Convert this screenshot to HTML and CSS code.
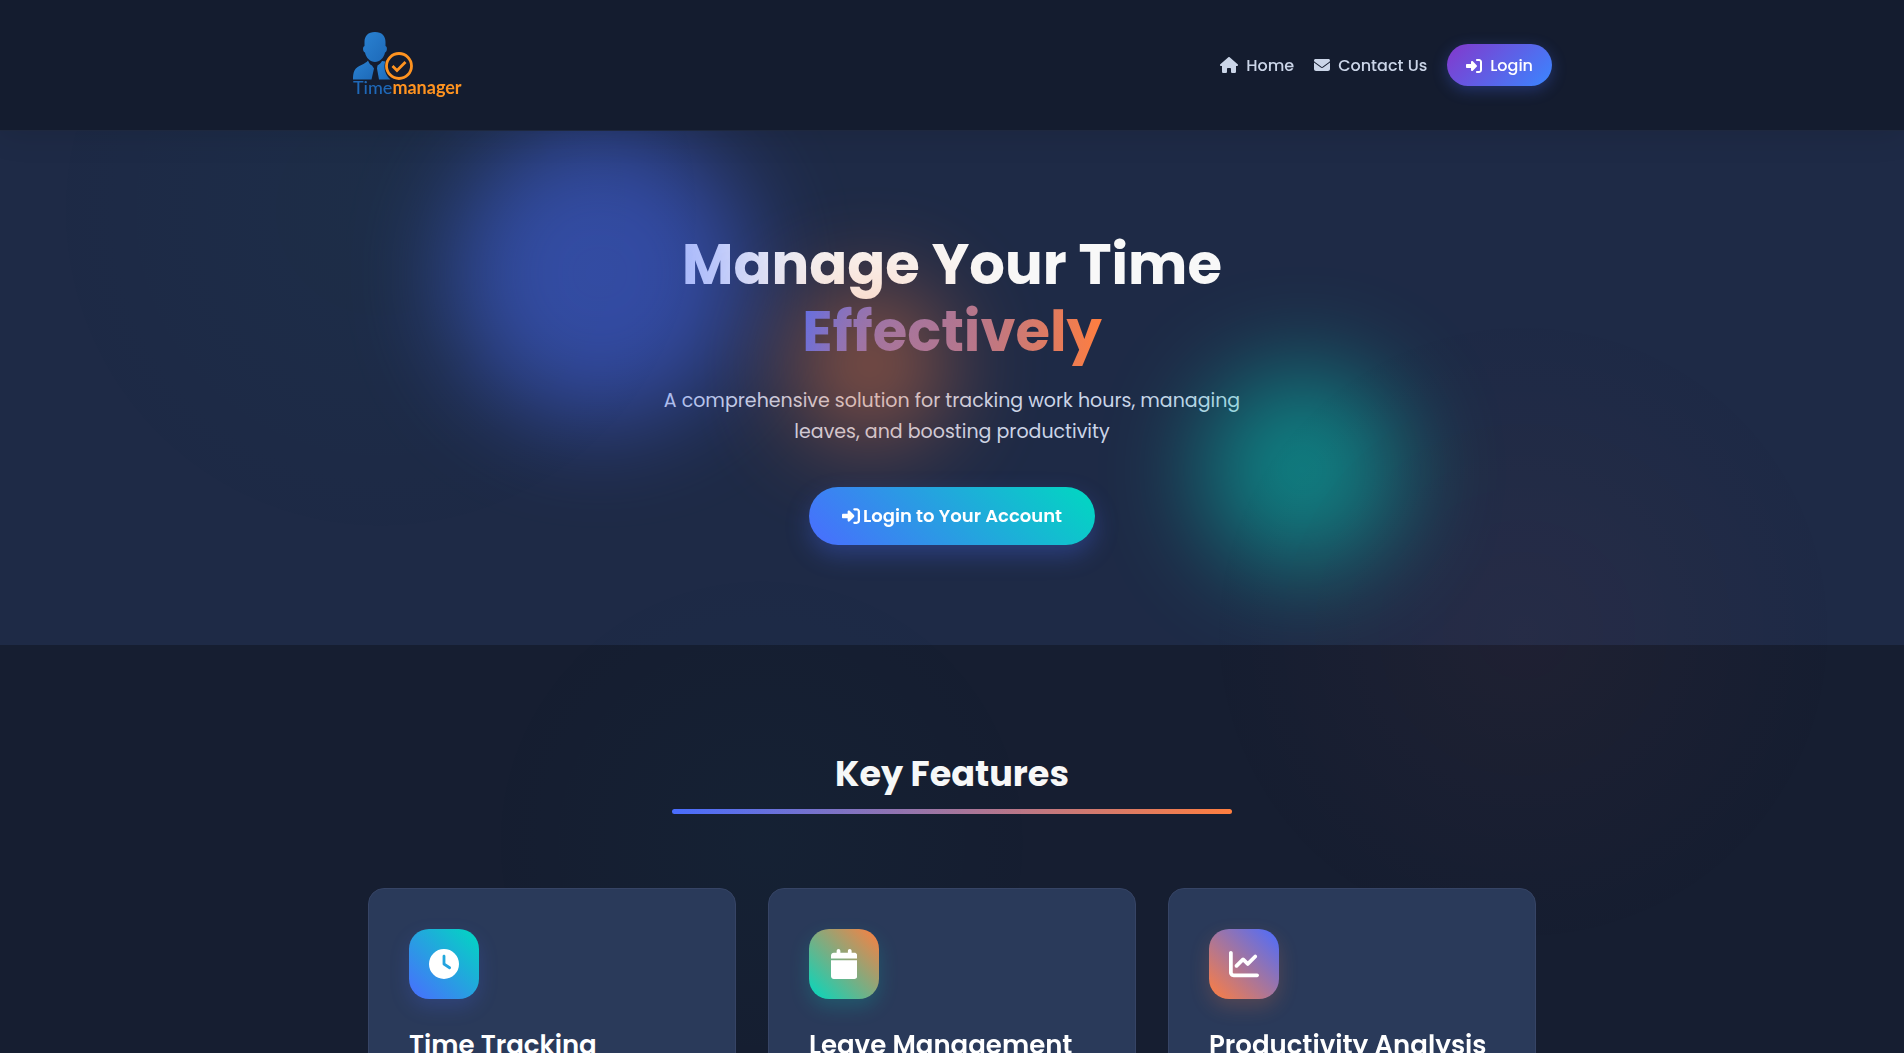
FILE: index.html
```html
<!DOCTYPE html>
<html lang="en">
<head>
<meta charset="utf-8">
<meta name="viewport" content="width=device-width, initial-scale=1">
<title>Timemanager</title>
<link rel="stylesheet" href="styles.css">
</head>
<body>
<svg class="sprite" aria-hidden="true">
  <symbol id="i-login" viewBox="0 0 512 512"><path d="M217.900 105.900L340.700 228.700c7.200 7.200 11.300 17.100 11.300 27.300s-4.100 20.100-11.300 27.300L217.900 406.100c-6.400 6.400-15 9.900-24 9.900c-18.700 0-33.900-15.200-33.900-33.900l0-62.100L32 320c-17.700 0-32-14.300-32-32l0-64c0-17.700 14.300-32 32-32l128 0 0-62.100c0-18.700 15.200-33.900 33.900-33.900c9 0 17.600 3.600 24 9.900zM352 416l64 0c17.700 0 32-14.300 32-32l0-256c0-17.700-14.300-32-32-32l-64 0c-17.700 0-32-14.300-32-32s14.300-32 32-32l64 0c53 0 96 43 96 96l0 256c0 53-43 96-96 96l-64 0c-17.700 0-32-14.300-32-32s14.300-32 32-32z"/></symbol>
</svg>
<header class="header">
  <div class="container header-inner">
    <a class="logo" href="#" aria-label="Timemanager">
      <svg width="110" height="70" viewBox="0 0 110 70">
        <defs>
          <linearGradient id="person" x1="0" y1="0" x2="1" y2="1"><stop offset="0" stop-color="#2a82d2"/><stop offset="1" stop-color="#1d69b8"/></linearGradient>
        </defs>
        <g fill="url(#person)">
          <path d="M23 2c-7 0-10.500 4-10.500 10v4c-2 .5-2 5.500.5 6.500C14 28 18.500 32 23 32s9-4 10-9.500c2.500-1 2.500-6 .5-6.500v-4C33.500 6 30 2 23 2z"/>
          <path d="M16 30.500C14 34 5 35.500 2.500 40.500 1 43.500 1 47 1 49.500h18.500l2.500-11-2-3C18 35 16.800 32.500 16 30.500z"/>
          <path d="M30 31c-.8 1.500-2.500 3.500-4.500 4.500L25 38.500l2 11h11.500c-3.500-3-6-7.500-6-12.500 0-2 .3-4 .8-5.500z"/>
        </g>
        <circle cx="47" cy="36" r="12.500" fill="none" stroke="#ff9320" stroke-width="2.800"/>
        <path d="M40.500 36l4.500 4.500 8.500-8.500" fill="none" stroke="#ff9320" stroke-width="2.800"/>
        <text class="logo-text" x="1" y="64"><tspan class="logo-time">Time</tspan><tspan class="logo-manager">manager</tspan></text>
      </svg>
    </a>
    <nav class="nav">
      <a class="nav-link" href="#"><svg class="icon-home" viewBox="0 0 576 512"><path d="M575.8 255.500c0 18-15 32.100-32 32.100l-32 0 .7 160.200c0 2.700-.2 5.400-.5 8.100l0 16.200c0 22.100-17.900 40-40 40l-16 0c-1.100 0-2.200 0-3.300-.1c-1.400 .1-2.800 .1-4.200 .1L416 512l-24 0c-22.100 0-40-17.900-40-40l0-24 0-64c0-17.700-14.300-32-32-32l-64 0c-17.700 0-32 14.300-32 32l0 64 0 24c0 22.100-17.900 40-40 40l-24 0-31.900 0c-1.500 0-3-.1-4.500-.2c-1.200 .1-2.400 .2-3.600 .2l-16 0c-22.100 0-40-17.900-40-40l0-112c0-.9 0-1.900 .1-2.800l0-69.700-32 0c-18 0-32-14-32-32.100c0-9 3-17 10-24L266.400 8c7-7 15-8 22-8s15 2 21 7L564.800 231.500c8 7 12 15 11 24z"/></svg>Home</a>
      <a class="nav-link" href="#"><svg class="icon" viewBox="0 0 512 512"><path d="M48 64C21.500 64 0 85.500 0 112c0 15.100 7.100 29.300 19.200 38.400L236.800 313.600c11.400 8.500 27 8.500 38.400 0L492.800 150.400c12.100-9.100 19.200-23.300 19.200-38.400c0-26.500-21.500-48-48-48L48 64zM0 176L0 384c0 35.300 28.700 64 64 64l384 0c35.300 0 64-28.700 64-64l0-208L294.400 339.200c-22.800 17.100-54 17.100-76.800 0L0 176z"/></svg>Contact Us</a>
      <a class="nav-login" href="#"><svg class="icon"><use href="#i-login"/></svg>Login</a>
    </nav>
  </div>
</header>
<main>
  <section class="hero">
    <div class="hero-content">
      <h1 class="hero-title">Manage Your Time <span class="accent">Effectively</span></h1>
      <p class="hero-text">A comprehensive solution for tracking work hours, managing leaves, and boosting productivity</p>
      <a class="cta" href="#"><svg class="icon-cta"><use href="#i-login"/></svg>Login to Your Account</a>
    </div>
    <div class="blob blob-blue"></div>
    <div class="blob blob-orange"></div>
    <div class="blob blob-teal"></div>
  </section>
  <section class="features">
    <h2 class="section-title">Key Features</h2>
    <div class="cards">
      <article class="card">
        <div class="card-icon card-icon-time"><svg viewBox="0 0 512 512"><path d="M256 0a256 256 0 1 1 0 512A256 256 0 1 1 256 0zM232 120l0 136c0 8 4 15.500 10.700 20l96 64c11 7.400 25.900 4.400 33.300-6.700s4.400-25.900-6.700-33.300L280 243.200 280 120c0-13.300-10.700-24-24-24s-24 10.700-24 24z"/></svg></div>
        <h3 class="card-title">Time Tracking</h3>
      </article>
      <article class="card">
        <div class="card-icon card-icon-leave"><svg viewBox="0 0 448 512"><path d="M96 32l0 32L48 64C21.500 64 0 85.500 0 112l0 48 448 0 0-48c0-26.500-21.500-48-48-48l-48 0 0-32c0-17.700-14.300-32-32-32s-32 14.300-32 32l0 32L160 64l0-32c0-17.700-14.300-32-32-32S96 14.300 96 32zM448 192L0 192 0 464c0 26.500 21.500 48 48 48l352 0c26.500 0 48-21.500 48-48l0-272z"/></svg></div>
        <h3 class="card-title">Leave Management</h3>
      </article>
      <article class="card">
        <div class="card-icon card-icon-chart"><svg viewBox="0 0 512 512"><path d="M64 64c0-17.700-14.300-32-32-32S0 46.300 0 64L0 400c0 44.200 35.800 80 80 80l400 0c17.700 0 32-14.300 32-32s-14.300-32-32-32L80 416c-8.800 0-16-7.200-16-16L64 64zm406.600 86.600c12.500-12.500 12.500-32.800 0-45.300s-32.800-12.500-45.300 0L320 210.700l-57.400-57.400c-12.500-12.500-32.800-12.500-45.300 0l-112 112c-12.500 12.500-12.500 32.800 0 45.300s32.800 12.500 45.300 0L240 221.300l57.400 57.400c12.500 12.500 32.800 12.500 45.300 0l128-128z"/></svg></div>
        <h3 class="card-title">Productivity Analysis</h3>
      </article>
    </div>
  </section>
</main>
</body>
</html>
```
FILE: styles.css
```css
* {
  box-sizing: border-box;
  margin: 0;
  padding: 0;
}

:root {
  --blue: #4a6cff;
  --teal: #00d9c0;
  --orange: #ff7e3f;
}

body {
  min-height: 100vh;
  color: #f8f8f8;
  font-family: Poppins, Inter, "Liberation Sans", sans-serif;
  font-size: 16px;
  line-height: 27px;
  background-color: #161e31;
}

/* faint glows that lie over the whole window */
body::before {
  content: "";
  position: fixed;
  inset: 0;
  z-index: 1;
  pointer-events: none;
  background:
    radial-gradient(circle 350px at 20% 20%, rgba(0, 217, 192, 0.02), transparent),
    radial-gradient(circle 320px at 80% 60%, rgba(255, 100, 90, 0.04), transparent),
    radial-gradient(circle 290px at 40% 80%, rgba(0, 217, 192, 0.02), transparent);
}

a {
  color: inherit;
  text-decoration: none;
}

svg {
  display: block;
  flex: none;
  fill: currentColor;
}

.sprite {
  display: none;
}

.container {
  width: 100%;
  max-width: 1200px;
  margin: 0 auto;
}

.header {
  position: relative;
  z-index: 2;
  padding: 30px 0;
  background: #141c2f;
  border-bottom: 1px solid #1e283e;
  box-shadow: 0 4px 30px rgba(0, 0, 0, 0.1);
}

.header-inner {
  display: flex;
  align-items: center;
  justify-content: space-between;
}

.logo-text {
  font-family: Lato, "Noto Sans", sans-serif;
  font-size: 18px;
}

.logo-time {
  fill: #1f68b8;
  font-weight: 500;
}

.logo-manager {
  fill: #ff9320;
  font-weight: 700;
}

.nav {
  display: flex;
  align-items: center;
  gap: 20px;
  font-weight: 500;
}

.nav-link,
.nav-login {
  display: flex;
  align-items: center;
  gap: 8px;
  color: #cbd5e8;
}

.nav-login {
  padding: 8px 19px 7px;
  border-radius: 50px;
  color: #fff;
  background: linear-gradient(135deg, #8338cc, #3a86ff);
  box-shadow: 0 4px 15px rgba(74, 108, 255, 0.3);
}

.icon {
  width: 16px;
  height: 16px;
}

.icon-home {
  width: 18px;
  height: 16px;
}

.hero {
  position: relative;
  overflow: hidden;
  padding: 100px 20px;
  background: #1e2a46;
  text-align: center;
}

.hero-content {
  display: flex;
  flex-direction: column;
  align-items: center;
  max-width: 600px;
  margin: 0 auto;
}

.hero-title {
  margin-bottom: 20px;
  font-size: 56px;
  font-weight: 700;
  line-height: 67px;
}

.accent {
  color: transparent;
  background: linear-gradient(90deg, var(--blue), var(--orange));
  background-clip: text;
  -webkit-background-clip: text;
}

.hero-text {
  margin-bottom: 40px;
  color: #cbd5e8;
  font-size: 19px;
  line-height: 31px;
}

.cta {
  position: relative;
  z-index: 2;
  display: flex;
  align-items: center;
  gap: 3px;
  padding: 16px 33px;
  border-radius: 50px;
  color: #fff;
  font-size: 18px;
  font-weight: 600;
  line-height: 26px;
  background: linear-gradient(45deg, var(--blue), var(--teal));
  box-shadow: 0 10px 25px rgba(74, 108, 255, 0.3);
}

.icon-cta {
  width: 18px;
  height: 18px;
}

.blob {
  position: absolute;
  border-radius: 50%;
  filter: blur(50px);
  opacity: 0.5;
}

.blob-blue {
  top: -8px;
  left: calc(50% - 502px);
  width: 300px;
  height: 300px;
  background: var(--blue);
}

.blob-orange {
  top: 158px;
  left: calc(50% - 157px);
  width: 150px;
  height: 150px;
  background: var(--orange);
}

.blob-teal {
  top: 239px;
  left: calc(50% + 250px);
  width: 200px;
  height: 200px;
  background: var(--teal);
}

.features {
  display: flex;
  flex-direction: column;
  align-items: center;
  padding: 100px 20px 0;
}

.section-title {
  width: 100%;
  max-width: 560px;
  margin-bottom: 74px;
  font-size: 35px;
  line-height: 58px;
  text-align: center;
}

.section-title::after {
  content: "";
  display: block;
  height: 5px;
  margin-top: 6px;
  border-radius: 5px;
  background: linear-gradient(90deg, var(--blue), var(--orange));
}

.cards {
  display: grid;
  grid-template-columns: repeat(3, 1fr);
  gap: 32px;
  width: 100%;
  max-width: 1168px;
}

.card {
  position: relative;
  z-index: 2;
  padding: 40px;
  border: 1px solid #364465;
  border-radius: 16px;
  background: #2a3a5a;
}

.card-icon {
  display: flex;
  align-items: center;
  justify-content: center;
  width: 70px;
  height: 70px;
  margin-bottom: 28px;
  border-radius: 20px;
  color: #fff;
}

.card-icon svg {
  height: 30px;
}

.card-icon-time {
  background: linear-gradient(45deg, var(--blue), var(--teal));
  box-shadow: 0 8px 20px rgba(74, 108, 255, 0.2);
}

.card-icon-leave {
  background: linear-gradient(45deg, var(--teal), var(--orange));
  box-shadow: 0 8px 20px rgba(0, 217, 192, 0.2);
}

.card-icon-chart {
  background: linear-gradient(45deg, var(--orange), var(--blue));
  box-shadow: 0 8px 20px rgba(255, 126, 63, 0.2);
}

.card-title {
  color: #fff;
  font-size: 26px;
  font-weight: 600;
  line-height: 37px;
}
```
